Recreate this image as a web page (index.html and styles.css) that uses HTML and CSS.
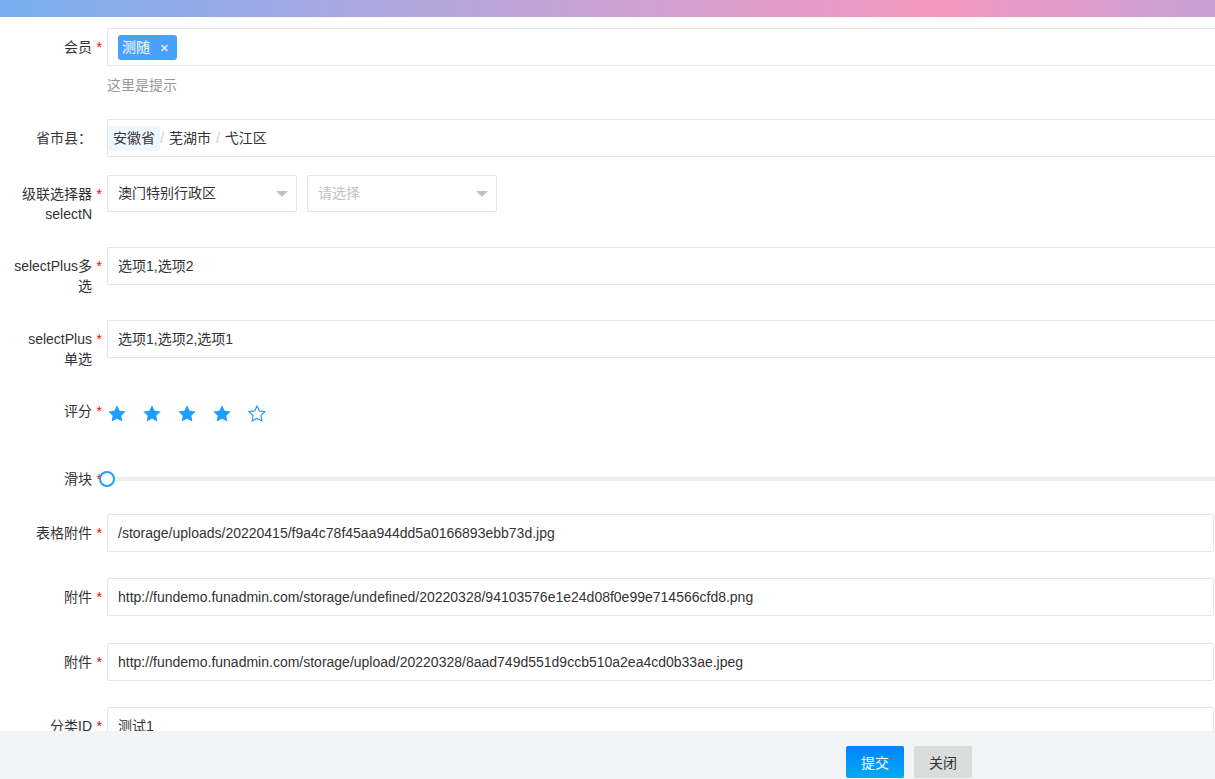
FILE: index.html
```html
<!DOCTYPE html>
<html lang="zh-CN">
<head>
    <meta charset="UTF-8">
    <meta name="viewport" content="width=device-width, initial-scale=1.0">
    <title>编辑</title>
    <link rel="stylesheet" href="styles.css">
</head>
<body>
    <div class="topbar"></div>
    <form class="form">
        <div class="form-item gap-member">
            <label class="form-label required">会员</label>
            <div class="input-block open">
                <div class="input tags">
                    <span class="tag">测随<i class="tag-close">×</i></span>
                </div>
                <div class="hint">这里是提示</div>
            </div>
        </div>

        <div class="form-item gap-area">
            <label class="form-label">省市县：</label>
            <div class="input-block open">
                <div class="input area">
                    <span class="area-item active">安徽省</span>
                    <span class="area-sep">/</span>
                    <span class="area-item">芜湖市</span>
                    <span class="area-sep">/</span>
                    <span class="area-item">弋江区</span>
                </div>
            </div>
        </div>

        <div class="form-item gap-small">
            <label class="form-label required">级联选择器<br>selectN</label>
            <div class="input-block selects">
                <div class="select">
                    <span>澳门特别行政区</span>
                    <i class="caret"></i>
                </div>
                <div class="select">
                    <span class="placeholder">请选择</span>
                    <i class="caret"></i>
                </div>
            </div>
        </div>

        <div class="form-item">
            <label class="form-label required">selectPlus多<br>选</label>
            <div class="input-block open">
                <div class="input">选项1,选项2</div>
            </div>
        </div>

        <div class="form-item gap-small">
            <label class="form-label required">selectPlus<br>单选</label>
            <div class="input-block open">
                <div class="input">选项1,选项2,选项1</div>
            </div>
        </div>

        <div class="form-item">
            <label class="form-label required">评分</label>
            <div class="input-block rate">
                <svg class="star" viewBox="0 0 24 24"><path class="on" d="M12 1.5l3.2 6.5 7.2 1-5.2 5 1.2 7.1L12 17.8l-6.4 3.3 1.2-7.1-5.2-5 7.2-1z"/></svg>
                <svg class="star" viewBox="0 0 24 24"><path class="on" d="M12 1.5l3.2 6.5 7.2 1-5.2 5 1.2 7.1L12 17.8l-6.4 3.3 1.2-7.1-5.2-5 7.2-1z"/></svg>
                <svg class="star" viewBox="0 0 24 24"><path class="on" d="M12 1.5l3.2 6.5 7.2 1-5.2 5 1.2 7.1L12 17.8l-6.4 3.3 1.2-7.1-5.2-5 7.2-1z"/></svg>
                <svg class="star" viewBox="0 0 24 24"><path class="on" d="M12 1.5l3.2 6.5 7.2 1-5.2 5 1.2 7.1L12 17.8l-6.4 3.3 1.2-7.1-5.2-5 7.2-1z"/></svg>
                <svg class="star" viewBox="0 0 24 24"><path class="off" d="M12 2.4l2.9 5.9 6.6 0.9-4.8 4.6 1.1 6.5L12 17.3l-5.8 3 1.1-6.5-4.8-4.6 6.6-0.9z"/></svg>
            </div>
        </div>

        <div class="form-item gap-slider">
            <label class="form-label required">滑块</label>
            <div class="input-block open slider">
                <div class="slider-track"></div>
                <span class="slider-handle"></span>
            </div>
        </div>

        <div class="form-item gap-file">
            <label class="form-label required">表格附件</label>
            <div class="input-block">
                <div class="input">/storage/uploads/20220415/f9a4c78f45aa944dd5a0166893ebb73d.jpg</div>
            </div>
        </div>

        <div class="form-item gap-file-b">
            <label class="form-label required">附件</label>
            <div class="input-block">
                <div class="input">http://fundemo.funadmin.com/storage/undefined/20220328/94103576e1e24d08f0e99e714566cfd8.png</div>
            </div>
        </div>

        <div class="form-item gap-file">
            <label class="form-label required">附件</label>
            <div class="input-block">
                <div class="input">http://fundemo.funadmin.com/storage/upload/20220328/8aad749d551d9ccb510a2ea4cd0b33ae.jpeg</div>
            </div>
        </div>

        <div class="form-item">
            <label class="form-label required">分类ID</label>
            <div class="input-block">
                <div class="input">测试1</div>
            </div>
        </div>
    </form>

    <div class="footer">
        <button class="btn btn-primary" type="button">提交</button>
        <button class="btn btn-close" type="button">关闭</button>
    </div>
</body>
</html>
```

FILE: styles.css
```css
html, body {
    margin: 0;
    padding: 0;
    overflow: hidden;
}
body {
    font-family: "Liberation Sans", "Noto Sans CJK SC", sans-serif;
    font-size: 14px;
    color: #333;
    background: #fff;
    height: 779px;
}
.topbar {
    height: 17px;
    background: linear-gradient(90deg, #78aef0 0%, #b3a6dd 35%, #f598c0 77%, #c6a0d6 100%);
}
.form {
    padding-top: 11px;
}
.form-item {
    display: flex;
    margin-bottom: 15px;
}
.gap-member { margin-bottom: 24px; }
.gap-area { margin-bottom: 18px; }
.gap-small { margin-bottom: 14px; }
.gap-slider { margin-bottom: 16px; }
.gap-file { margin-bottom: 26px; }
.gap-file-b { margin-bottom: 27px; }

.form-label {
    position: relative;
    flex: none;
    width: 107px;
    box-sizing: border-box;
    padding: 9px 15px 9px 0;
    line-height: 20px;
    text-align: right;
    color: #333;
}
.required::after {
    content: "*";
    position: absolute;
    top: 9px;
    right: 5px;
    line-height: 20px;
    color: #f00;
}
.input-block {
    flex: 1;
    min-width: 0;
    margin-right: 1px;
}
.input {
    height: 38px;
    box-sizing: border-box;
    border: 1px solid #e6e6e6;
    border-radius: 2px;
    padding: 0 10px;
    line-height: 36px;
    white-space: nowrap;
    overflow: hidden;
    background: #fff;
}
/* these fields run on past the right edge of the window */
.open {
    margin-right: 0;
}
.open .input {
    border-right: none;
    border-radius: 2px 0 0 2px;
}
.tags {
    display: flex;
    align-items: center;
}
.tag {
    display: inline-flex;
    align-items: center;
    height: 25px;
    padding: 0 8px 0 4px;
    background: #48a2fb;
    color: #fff;
    border-radius: 3px;
    line-height: 25px;
}
.tag-close {
    font-style: normal;
    margin-left: 10px;
    font-size: 15px;
}
.hint {
    padding-top: 9px;
    line-height: 20px;
    color: #999;
}
.area {
    display: flex;
    align-items: center;
    padding-left: 0;
}
.area-item {
    padding: 0 5px;
    height: 25px;
    line-height: 25px;
}
.area-item.active {
    background: #eef6ff;
    border-radius: 2px;
}
.area-sep {
    color: #ccc;
}
.selects {
    display: flex;
    gap: 10px;
}
.select {
    position: relative;
    width: 190px;
    height: 37px;
    box-sizing: border-box;
    border: 1px solid #e6e6e6;
    border-radius: 2px;
    padding: 0 10px;
    line-height: 35px;
}
.placeholder {
    color: #c2c2c2;
}
.caret {
    position: absolute;
    right: 8px;
    top: 15px;
    width: 0;
    height: 0;
    border-left: 6px solid transparent;
    border-right: 6px solid transparent;
    border-top: 6px solid #c2c2c2;
}
.rate {
    display: flex;
    gap: 15px;
    height: 53px;
    padding-top: 12px;
    box-sizing: border-box;
}
.star {
    width: 20px;
    height: 20px;
}
.star .on {
    fill: #1e9fff;
}
.star .off {
    fill: none;
    stroke: #1e9fff;
    stroke-width: 1.4;
}
.slider {
    position: relative;
    height: 38px;
    padding-top: 17px;
    box-sizing: border-box;
}
.slider-track {
    height: 4px;
    background: #eee;
    border-radius: 2px 0 0 2px;
}
.slider-handle {
    position: absolute;
    left: -8px;
    top: 11px;
    width: 16px;
    height: 16px;
    box-sizing: border-box;
    border: 2px solid #1e9fff;
    border-radius: 50%;
    background: #fff;
}
.footer {
    position: fixed;
    left: 0;
    right: 0;
    bottom: 0;
    height: 48px;
    box-sizing: border-box;
    padding: 15px 0 0 846px;
    background: #f2f4f5;
    display: flex;
    gap: 10px;
}
.btn {
    width: 58px;
    height: 32px;
    border: none;
    border-radius: 2px;
    font-family: inherit;
    font-size: 14px;
    padding: 0;
    cursor: pointer;
}
.btn-primary {
    background: linear-gradient(180deg, #0082ff, #00abef);
    color: #fff;
}
.btn-close {
    background: #dbdcdc;
    color: #333;
}
```
